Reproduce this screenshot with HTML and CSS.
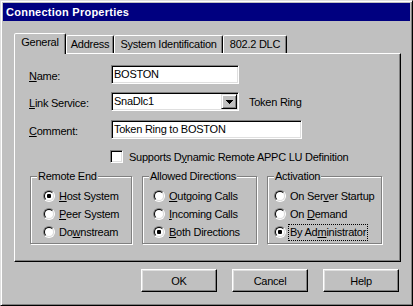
FILE: index.html
```html
<!DOCTYPE html>
<html lang="en">
<head>
    <meta charset="UTF-8">
    <title>Connection Properties</title>
    <link rel="stylesheet" href="styles.css">
</head>
<body>
    <div class="window">
        <div class="titlebar">Connection Properties</div>

        <div class="content">
            <!-- Tab strip -->
            <div class="tabs">
                <div class="tab tab-active tab-general">General</div>
                <div class="tab tab-address">Address</div>
                <div class="tab tab-system">System Identification</div>
                <div class="tab tab-dlc">802.2 DLC</div>
            </div>

            <div class="panel">
                <div class="field-row">
                    <span class="field-label"><u>N</u>ame:</span>
                    <div class="edit edit-short">BOSTON</div>
                </div>
                <div class="field-row row-link">
                    <span class="field-label"><u>L</u>ink Service:</span>
                    <div class="combo">
                        <span class="combo-text">SnaDlc1</span>
                        <span class="combo-btn">
                            <svg width="7" height="4" viewBox="0 0 7 4" shape-rendering="crispEdges">
                                <path d="M0 0h7v1h-1v1h-1v1h-1v1h-1v-1h-1v-1h-1v-1h-1z" fill="#000"/>
                            </svg>
                        </span>
                    </div>
                    <span class="field-note">Token Ring</span>
                </div>
                <div class="field-row row-comment">
                    <span class="field-label"><u>C</u>omment:</span>
                    <div class="edit edit-long">Token Ring to BOSTON</div>
                </div>

                <div class="check-row">
                    <span class="checkbox"></span>
                    <span>Supports D<u>y</u>namic Remote APPC LU Definition</span>
                </div>

                <!-- Radio groups -->
                <div class="groups">
                    <div class="group group-remote">
                        <div class="group-title">Remote End</div>
                        <div class="group-items">
                            <div class="option">
                                <span class="radio radio-checked"><span class="radio-in"></span></span>
                                <span class="option-text"><u>H</u>ost System</span>
                            </div>
                            <div class="option">
                                <span class="radio"><span class="radio-in"></span></span>
                                <span class="option-text"><u>P</u>eer System</span>
                            </div>
                            <div class="option">
                                <span class="radio"><span class="radio-in"></span></span>
                                <span class="option-text">Do<u>w</u>nstream</span>
                            </div>
                        </div>
                    </div>

                    <div class="group group-allowed">
                        <div class="group-title">Allowed Directions</div>
                        <div class="group-items">
                            <div class="option">
                                <span class="radio"><span class="radio-in"></span></span>
                                <span class="option-text"><u>O</u>utgoing Calls</span>
                            </div>
                            <div class="option">
                                <span class="radio"><span class="radio-in"></span></span>
                                <span class="option-text"><u>I</u>ncoming Calls</span>
                            </div>
                            <div class="option">
                                <span class="radio radio-checked"><span class="radio-in"></span></span>
                                <span class="option-text"><u>B</u>oth Directions</span>
                            </div>
                        </div>
                    </div>

                    <div class="group group-activation">
                        <div class="group-title">Activation</div>
                        <div class="group-items">
                            <div class="option">
                                <span class="radio"><span class="radio-in"></span></span>
                                <span class="option-text">On Ser<u>v</u>er Startup</span>
                            </div>
                            <div class="option">
                                <span class="radio"><span class="radio-in"></span></span>
                                <span class="option-text">On <u>D</u>emand</span>
                            </div>
                            <div class="option">
                                <span class="radio radio-checked"><span class="radio-in"></span></span>
                                <span class="option-text focus">By Ad<u>m</u>inistrator</span>
                            </div>
                        </div>
                    </div>
                </div>
            </div>

            <div class="buttons">
                <button class="btn">OK</button>
                <button class="btn">Cancel</button>
                <button class="btn">Help</button>
            </div>
        </div>
    </div>
</body>
</html>
```

FILE: styles.css
```css
/* Global Styles */
body {
    margin: 0;
    font-family: 'Liberation Sans', Arial, sans-serif;
    font-size: 11px;
    letter-spacing: -0.25px;
    color: #000;
    background-color: #c0c0c0;
}

u {
    text-decoration: underline;
}

/* Window frame */
.window {
    box-sizing: border-box;
    width: 413px;
    height: 306px;
    padding: 2px;
    border: 1px solid;
    border-color: #dfdfdf #000 #000 #dfdfdf;
    box-shadow: inset 1px 1px 0 #fff, inset -1px -1px 0 #808080;
    background-color: #c0c0c0;
}

.titlebar {
    height: 18px;
    line-height: 18px;
    padding-left: 3px;
    background-color: #000080;
    color: #fff;
    font-weight: bold;
    letter-spacing: 0.25px;
}

.content {
    padding: 12px 0 0 11px;
}

/* Tabs */
.tabs {
    display: flex;
    align-items: flex-end;
    height: 20px;
}

.tab {
    box-sizing: border-box;
    height: 18px;
    line-height: 17px;
    text-align: center;
    border: 1px solid;
    border-bottom: none;
    border-color: #fff #000 transparent #fff;
    border-radius: 2px 2px 0 0;
    box-shadow: inset -1px 0 0 #808080;
    background-color: #c0c0c0;
}

.tab-active {
    position: relative;
    height: 21px;
    margin-bottom: -1px;
}

.tab-general { width: 52px; }
.tab-address { width: 48px; }
.tab-system { width: 109px; }
.tab-dlc { width: 64px; }

/* Panel */
.panel {
    box-sizing: border-box;
    width: 387px;
    height: 209px;
    padding: 11px 0 0 14px;
    border: 1px solid;
    border-color: #fff #000 #000 #fff;
    box-shadow: inset -1px -1px 0 #808080;
}

.field-row {
    display: flex;
    align-items: center;
    height: 19px;
}

.row-link { margin-top: 8px; }
.row-comment { margin-top: 9px; }

.field-label {
    width: 82px;
    padding-top: 2px;
}

.edit,
.combo {
    box-sizing: border-box;
    height: 19px;
    border: 1px solid;
    border-color: #808080 #fff #fff #808080;
    box-shadow: inset 1px 1px 0 #000, inset -1px -1px 0 #dfdfdf;
    background-color: #fff;
}

.edit {
    padding: 0 2px;
    line-height: 17px;
}

.edit-short { width: 128px; }
.edit-long { width: 191px; }

.combo {
    display: flex;
    width: 128px;
    padding: 1px;
}

.combo-text {
    flex: 1;
    padding-left: 1px;
    line-height: 15px;
}

.combo-btn {
    box-sizing: border-box;
    display: flex;
    align-items: center;
    justify-content: center;
    width: 16px;
    height: 15px;
    border: 1px solid;
    border-color: #dfdfdf #000 #000 #dfdfdf;
    box-shadow: inset 1px 1px 0 #fff, inset -1px -1px 0 #808080;
    background-color: #c0c0c0;
}

.field-note {
    margin-left: 10px;
}

/* Checkbox */
.check-row {
    display: flex;
    align-items: center;
    gap: 6px;
    height: 13px;
    margin: 11px 0 0 81px;
}

.checkbox {
    box-sizing: border-box;
    width: 13px;
    height: 13px;
    border: 1px solid;
    border-color: #808080 #fff #fff #808080;
    box-shadow: inset 1px 1px 0 #000, inset -1px -1px 0 #dfdfdf;
    background-color: #fff;
}

/* Group boxes */
.groups {
    display: flex;
    gap: 10px;
    margin: 13px 0 0 1px;
}

.group {
    box-sizing: border-box;
    height: 68px;
    border: 1px solid #808080;
    box-shadow: 1px 1px 0 #fff, inset 1px 1px 0 #fff;
}

.group-remote { width: 102px; }
.group-allowed { width: 115px; }
.group-activation { width: 115px; }

.group-title {
    width: fit-content;
    margin: -7px 0 0 6px;
    padding: 0 1px;
    line-height: 13px;
    background-color: #c0c0c0;
}

.group-items {
    padding-top: 4px;
}

.group-remote .group-items { padding-left: 12px; }
.group-allowed .group-items { padding-left: 10px; }
.group-activation .group-items { padding-left: 6px; }

.option {
    display: flex;
    align-items: center;
    gap: 3px;
    height: 18px;
}

.option-text {
    padding: 1px;
    line-height: 13px;
}

.focus {
    outline: 1px dotted #000;
}

/* Radio buttons */
.radio {
    box-sizing: border-box;
    flex: none;
    width: 12px;
    height: 12px;
    border: 1px solid;
    border-color: #808080 #fff #fff #808080;
    border-radius: 50%;
}

.radio-in {
    box-sizing: border-box;
    display: flex;
    align-items: center;
    justify-content: center;
    width: 10px;
    height: 10px;
    border: 1px solid;
    border-color: #000 #dfdfdf #dfdfdf #000;
    border-radius: 50%;
    background-color: #fff;
}

.radio-checked .radio-in::after {
    content: "";
    width: 4px;
    height: 4px;
    border-radius: 1px;
    background-color: #000;
}

/* Dialog buttons */
.buttons {
    display: flex;
    justify-content: flex-end;
    gap: 15px;
    margin-top: 7px;
    padding-right: 11px;
}

.btn {
    box-sizing: border-box;
    width: 76px;
    height: 23px;
    padding: 0;
    font: inherit;
    letter-spacing: inherit;
    color: #000;
    border: 1px solid;
    border-color: #fff #000 #000 #fff;
    box-shadow: inset -1px -1px 0 #808080, inset 1px 1px 0 #dfdfdf;
    background-color: #c0c0c0;
}
```
